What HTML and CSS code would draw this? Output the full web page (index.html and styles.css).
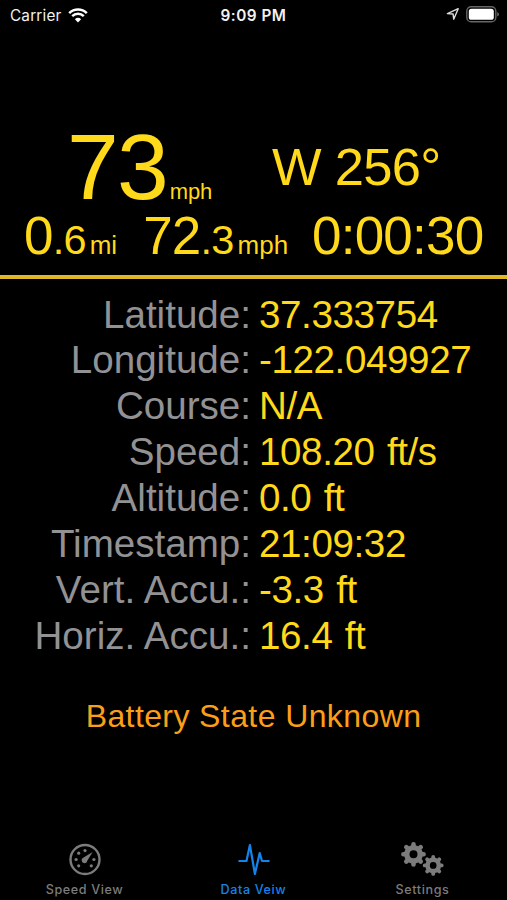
FILE: index.html
```html
<!DOCTYPE html>
<html lang="en">
<head>
  <meta charset="UTF-8" />
  <meta name="viewport" content="width=device-width, initial-scale=1.0"/>
  <title>Data View</title>
  <link rel="stylesheet" href="styles.css">
</head>
<body>
  <header class="status-bar">
    <div class="carrier">
      <span>Carrier</span>
      <svg class="wifi" viewBox="0 0 20 15" width="20" height="15">
        <path d="M1.2 5.1 A12.7 12.7 0 0 1 18.8 5.1" />
        <path d="M4.2 8.2 A8.3 8.3 0 0 1 15.8 8.2" />
        <path class="dot" d="M10 14.6 L6.9 11.3 A4.5 4.5 0 0 1 13.1 11.3 Z" />
      </svg>
    </div>
    <div class="clock">9:09 PM</div>
    <div class="indicators">
      <svg class="location" viewBox="0 0 14 14" width="14" height="14">
        <path d="M1.4 6.6 L12.2 1.7 L7.7 12.2 L7.1 7 Z" />
      </svg>
      <svg class="battery" viewBox="0 0 34 17" width="34" height="17">
        <rect class="shell" x="0.8" y="0.8" width="29" height="15" rx="4.4" />
        <rect class="level" x="2.8" y="2.8" width="25" height="11" rx="2.6" />
        <path class="cap" d="M31.2 6 Q33 6.7 33 8.3 Q33 9.9 31.2 10.6 Z" />
      </svg>
    </div>
  </header>

  <main>
    <section class="summary">
      <div class="summary-top">
        <div class="speed">73<span class="unit">mph</span></div>
        <div class="heading">W 256°</div>
      </div>
      <div class="summary-bottom">
        <div class="distance">0<span class="decimal">.6</span><span class="unit">mi</span></div>
        <div class="average">72<span class="decimal">.3</span><span class="unit">mph</span></div>
        <div class="timer">0:00:30</div>
      </div>
    </section>

    <dl class="data">
      <dt>Latitude:</dt><dd>37.333754</dd>
      <dt>Longitude:</dt><dd>-122.049927</dd>
      <dt>Course:</dt><dd>N/A</dd>
      <dt>Speed:</dt><dd>108.20 ft/s</dd>
      <dt>Altitude:</dt><dd>0.0 ft</dd>
      <dt>Timestamp:</dt><dd>21:09:32</dd>
      <dt>Vert. Accu.:</dt><dd>-3.3 ft</dd>
      <dt>Horiz. Accu.:</dt><dd>16.4 ft</dd>
    </dl>

    <p class="battery-state">Battery State Unknown</p>
  </main>

  <nav class="tab-bar">
    <a class="tab">
      <svg viewBox="0 0 44 36" width="44" height="36">
        <circle class="ring" cx="22" cy="19.5" r="14.5" />
        <circle cx="22" cy="10.6" r="1.6" />
        <circle cx="15.7" cy="13.2" r="1.6" />
        <circle cx="13.1" cy="19.5" r="1.6" />
        <circle cx="15.7" cy="25.8" r="1.6" />
        <circle cx="28.3" cy="25.8" r="1.6" />
        <circle cx="30.9" cy="19.5" r="1.6" />
        <path d="M29.6 11.9 L24.4 20.5 A2.9 2.9 0 1 1 20.6 17.5 Z" />
      </svg>
      <span>Speed View</span>
    </a>
    <a class="tab active">
      <svg viewBox="0 0 44 36" width="44" height="36">
        <path class="pulse" d="M7.3 21 H14.5 L17.9 5 L22.9 34 L27.7 13 L30 21 H36.7" />
      </svg>
      <span>Data Veiw</span>
    </a>
    <a class="tab">
      <svg viewBox="0 0 44 36" width="44" height="36">
        <g transform="translate(12.5 14.3)">
          <circle class="gear" r="6.7" />
          <g class="teeth">
            <path d="M0 -8.6V-10.1M0 8.6V10.1M-8.6 0H-10.1M8.6 0H10.1M6.1 -6.1L7.2 -7.2M6.1 6.1L7.2 7.2M-6.1 6.1L-7.2 7.2M-6.1 -6.1L-7.2 -7.2" />
          </g>
        </g>
        <g transform="translate(32.2 25.4) scale(0.84)">
          <circle class="gear" r="6.7" />
          <g class="teeth">
            <path d="M0 -8.6V-10.1M0 8.6V10.1M-8.6 0H-10.1M8.6 0H10.1M6.1 -6.1L7.2 -7.2M6.1 6.1L7.2 7.2M-6.1 6.1L-7.2 7.2M-6.1 -6.1L-7.2 -7.2" />
          </g>
        </g>
      </svg>
      <span>Settings</span>
    </a>
  </nav>
</body>
</html>
```

FILE: styles.css
```css
* {
  box-sizing: border-box;
}
body {
  display: flex;
  flex-direction: column;
  height: 100vh;
  margin: 0;
  background-color: #000;
  color: #ffd91a;
  font-family: "Liberation Sans", Arial, sans-serif;
  overflow: hidden;
}

/* status bar */
.status-bar {
  display: grid;
  grid-template-columns: 1fr auto 1fr;
  align-items: center;
  height: 30px;
  padding: 0 7px 0 10px;
  color: #f2f2f2;
  font-family: Inter, sans-serif;
  font-size: 15.3px;
}
.carrier {
  display: flex;
  align-items: center;
  gap: 6px;
  letter-spacing: 0.2px;
}
.wifi {
  fill: none;
  stroke: #fff;
  stroke-width: 2.5;
}
.wifi .dot {
  fill: #fff;
  stroke: none;
}
.clock {
  margin-right: 3px;
  font-weight: 600;
  letter-spacing: 0.5px;
}
.indicators {
  display: flex;
  align-items: center;
  justify-content: flex-end;
  gap: 6px;
  padding-bottom: 2px;
}
.location {
  fill: none;
  stroke: #ddd;
  stroke-width: 1.4;
  stroke-linejoin: round;
}
.battery .shell {
  fill: none;
  stroke: #666;
  stroke-width: 1.4;
}
.battery .level {
  fill: #fff;
}
.battery .cap {
  fill: #666;
}

/* speed, heading and trip */
main {
  flex: 1;
}
.summary {
  height: 249px;
  padding-top: 92px;
  border-bottom: 4px solid #dfb925;
}
.summary-top {
  display: flex;
  gap: 60px;
  height: 84px;
  padding-left: 67px;
  white-space: nowrap;
}
.speed {
  font-size: 93px;
  line-height: 90px;
  letter-spacing: -1.8px;
}
.speed .unit {
  margin-left: 3px;
  font-size: 22px;
  letter-spacing: -0.2px;
}
.heading {
  padding-top: 15px;
  font-size: 52.5px;
  line-height: 60px;
  letter-spacing: -0.7px;
}
.summary-bottom {
  display: flex;
  height: 60px;
  padding-left: 24px;
  font-size: 53px;
  line-height: 60px;
  letter-spacing: -0.8px;
  white-space: nowrap;
}
.decimal {
  font-size: 41.5px;
}
.summary-bottom .unit {
  margin-left: 4px;
  font-size: 26px;
  letter-spacing: 0;
}
.average {
  margin-left: 26px;
}
.timer {
  margin-left: 24px;
}

/* location readings */
.data {
  display: grid;
  grid-template-columns: 251px 1fr;
  grid-auto-rows: 45.85px;
  column-gap: 8px;
  margin: 12.6px 0 0;
  font-size: 38.6px;
  line-height: 46px;
  white-space: nowrap;
}
.data dt {
  color: #929294;
  text-align: right;
}
.data dd {
  margin: 0;
  letter-spacing: -0.4px;
  word-spacing: 2px;
}
.battery-state {
  margin: 39.4px 0 0;
  color: #fb9f18;
  font-size: 32px;
  line-height: 36px;
  letter-spacing: 0.4px;
  text-align: center;
}

/* tab bar */
.tab-bar {
  display: grid;
  grid-template-columns: repeat(3, 1fr);
  height: 60px;
}
.tab {
  display: flex;
  flex-direction: column;
  align-items: center;
  gap: 6px;
  color: #7c7c7c;
  fill: currentColor;
  font-family: Inter, sans-serif;
  font-size: 12.6px;
  font-weight: 500;
  line-height: 16px;
  letter-spacing: 0.6px;
}
.tab.active {
  color: #1583ec;
}
.ring {
  fill: none;
  stroke: currentColor;
  stroke-width: 2.4;
}
.pulse {
  fill: none;
  stroke: currentColor;
  stroke-width: 2.2;
  stroke-linejoin: round;
  stroke-linecap: round;
}
.gear {
  fill: none;
  stroke: currentColor;
  stroke-width: 5.4;
}
.teeth {
  fill: none;
  stroke: currentColor;
  stroke-width: 4.6;
  stroke-linecap: round;
}
```
